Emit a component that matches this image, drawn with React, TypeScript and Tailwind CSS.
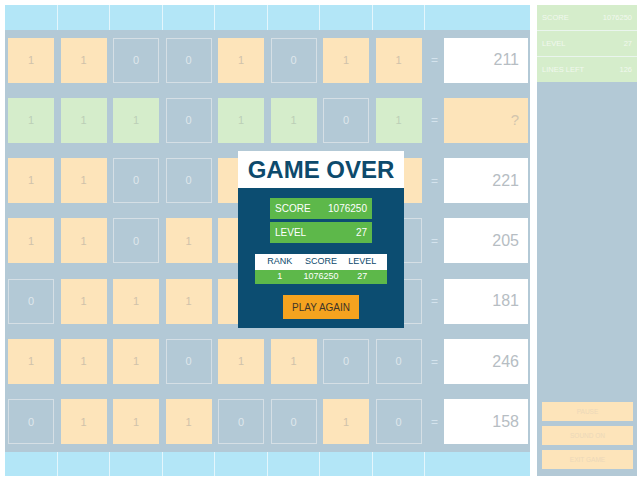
const rows = [
  { bits: [1, 1, 0, 0, 1, 0, 1, 1], target: "211", active: false },
  { bits: [1, 1, 1, 0, 1, 1, 0, 1], target: "?", active: true },
  { bits: [1, 1, 0, 0, 1, 1, 0, 1], target: "221", active: false },
  { bits: [1, 1, 0, 1, 1, 0, 1, 0], target: "205", active: false },
  { bits: [0, 1, 1, 1, 1, 0, 1, 0], target: "181", active: false },
  { bits: [1, 1, 1, 0, 1, 1, 0, 0], target: "246", active: false },
  { bits: [0, 1, 1, 1, 0, 0, 1, 0], target: "158", active: false },
]

const stats = [
  { label: "SCORE", value: "1076250" },
  { label: "LEVEL", value: "27" },
  { label: "LINES LEFT", value: "126" },
]

const controls = ["PAUSE", "SOUND ON", "EXIT GAME"]

function Bar() {
  return (
    <div className="grid h-full grid-cols-10 bg-[#b3e6f7]">
      {Array.from({ length: 8 }).map((_, i) => (
        <div key={i} className="border-r border-[#e4f6fc]" />
      ))}
      <div className="col-span-2" />
    </div>
  )
}

function Bit({ on, active }: { on: number; active: boolean }) {
  if (!on) {
    return (
      <div className="flex h-[45px] w-[46px] items-center justify-center border-[1.5px] border-[#d5dfe5] text-[11px] text-[#dfe7ec]">
        0
      </div>
    )
  }
  return (
    <div
      className={
        active
          ? "flex h-[45px] w-[46px] items-center justify-center bg-[#d5edcb] text-[11px] text-[#bccfb7]"
          : "flex h-[45px] w-[46px] items-center justify-center bg-[#fde4ba] text-[11px] text-[#d0c2aa]"
      }
    >
      1
    </div>
  )
}

export default function App() {
  return (
    <div className="relative flex h-[480px] w-[643px] gap-[7px] bg-white pl-[5px] pt-[5px] font-['Liberation_Sans',Arial,sans-serif]">
      <div className="flex h-[471px] w-[525px] flex-col bg-[#b3c9d6]">
        <div className="h-[25px]">
          <Bar />
        </div>
        <div className="grid flex-1 grid-rows-7">
          {rows.map((row, r) => (
            <div key={r} className="grid grid-cols-10 items-center">
              {row.bits.map((b, i) => (
                <div key={i} className="flex pl-[3px]">
                  <Bit on={b} active={row.active} />
                </div>
              ))}
              <div className="col-span-2 flex items-center">
                <span className="w-[19px] text-center text-[12px] text-[#d4e3ed]">=</span>
                <div
                  className={
                    row.active
                      ? "flex h-[45px] w-[84px] items-center justify-end bg-[#fde4ba] pr-[9px] text-[15px] text-[#d2c5ae]"
                      : "flex h-[45px] w-[84px] items-center justify-end bg-white pr-[9px] text-[16px] text-[#b6bdc3]"
                  }
                >
                  {row.target}
                </div>
              </div>
            </div>
          ))}
        </div>
        <div className="h-[24px]">
          <Bar />
        </div>
      </div>

      <div className="flex h-[471px] w-[100px] flex-col bg-[#b3c9d6]">
        <div className="flex flex-col gap-px bg-[#eaf5ee]">
          {stats.map((s) => (
            <div
              key={s.label}
              className="flex h-[25px] items-center justify-between bg-[#d5edcb] px-[5px] text-[7.5px] text-[#f1f8ee]"
            >
              <span>{s.label}</span>
              <span>{s.value}</span>
            </div>
          ))}
        </div>
        <div className="mt-auto flex flex-col gap-[5px] pb-[7px] pl-[5px] pr-[4px]">
          {controls.map((c) => (
            <div
              key={c}
              className="flex h-[19px] items-center justify-center bg-[#fde4ba] text-[6.5px] text-[#ecd8b9]"
            >
              {c}
            </div>
          ))}
        </div>
      </div>

      <div className="absolute left-[238px] top-[151px] w-[166px]">
        <div className="flex h-[37px] items-center justify-center bg-white text-[24px] font-bold text-[#0d4a6c]">
          GAME OVER
        </div>
        <div className="flex flex-col items-center bg-[#0c4d71] pb-[9px] pt-[10px]">
          <div className="flex w-[102px] flex-col gap-[3px]">
            <div className="flex h-[21px] items-center justify-between bg-[#5db84a] px-[5px] text-[10px] text-white">
              <span>SCORE</span>
              <span>1076250</span>
            </div>
            <div className="flex h-[21px] items-center justify-between bg-[#5db84a] px-[5px] text-[10px] text-white">
              <span>LEVEL</span>
              <span>27</span>
            </div>
          </div>
          <div className="mt-[11px] w-[132px] text-[9px]">
            <div className="grid h-[16px] grid-cols-3 items-center bg-white px-1 text-center text-[#0d4a6c]">
              <span>RANK</span>
              <span>SCORE</span>
              <span>LEVEL</span>
            </div>
            <div className="grid h-[14px] grid-cols-3 items-center bg-[#5db84a] px-1 text-center text-white">
              <span>1</span>
              <span>1076250</span>
              <span>27</span>
            </div>
          </div>
          <div className="mt-[11px] flex h-[24px] w-[76px] items-center justify-center bg-[#f5a31f] text-[10px] text-[#3e3528]">
            PLAY AGAIN
          </div>
        </div>
      </div>
    </div>
  )
}
